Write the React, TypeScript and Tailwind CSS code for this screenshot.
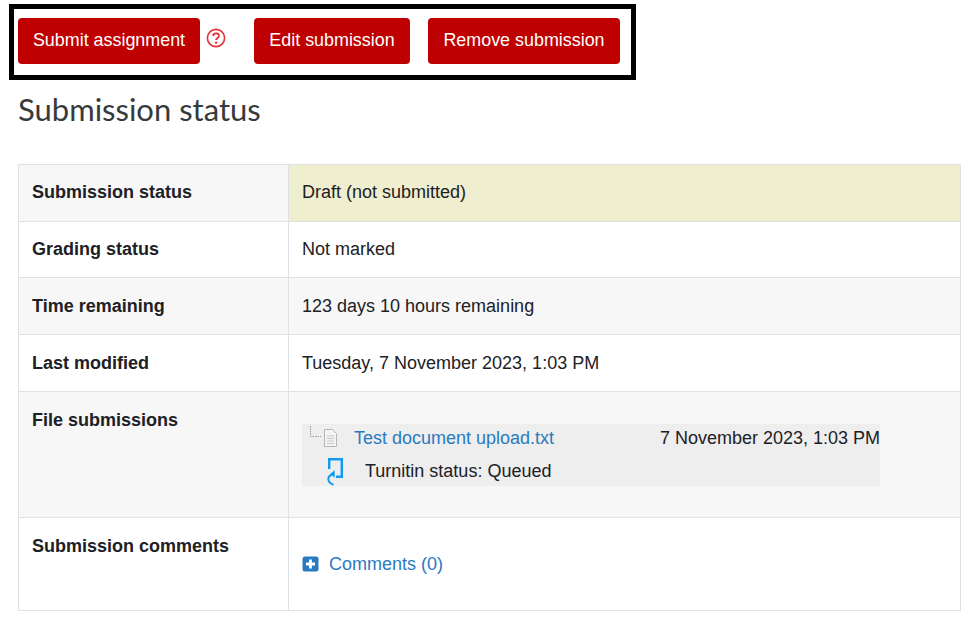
export default function App() {
  const th = "border border-[#dee2e6] px-[13px] align-top font-bold text-[#1d2125] w-[270px]";
  const td = "border border-[#dee2e6] px-[13px] align-top text-[#1d2125]";
  const btn = "h-[46px] rounded-[4px] bg-[#bf0000] text-white text-center text-[17.9px] pb-[2px]";
  return (
    <div className="w-[972px] h-[621px] overflow-hidden bg-white text-[18px] leading-[20px] font-['Liberation_Sans',Arial,sans-serif]">
      <div className="pl-[9px] pt-[4px]">
        <div className="inline-flex items-start border-[5px] border-black w-[627px] h-[76px] pl-[4px] pt-[9px]">
          <button className={`${btn} w-[182px]`}>Submit assignment</button>
          <span className="ml-[6px] mt-[10px] w-[20px] h-[20px] text-[#e5303a]">
            <svg viewBox="0 0 20 20" width="20" height="20" fill="none">
              <circle cx="10" cy="10" r="8.6" stroke="currentColor" strokeWidth="1.6" />
              <path d="M7.2 8c0-1.7 1.2-2.7 2.9-2.7s2.8 1 2.8 2.4c0 1.1-.6 1.7-1.4 2.2-.8.5-1.4 1-1.4 2" stroke="currentColor" strokeWidth="1.8" />
              <circle cx="10.1" cy="14.6" r="1.2" fill="currentColor" />
            </svg>
          </span>
          <button className={`${btn} ml-[28px] w-[156px]`}>Edit submission</button>
          <button className={`${btn} ml-[18px] w-[192px]`}>Remove submission</button>
        </div>
      </div>
      <h2 className="ml-[18px] mt-[9px] h-[41px] text-[31px] leading-[40px] text-[#373a3c] font-['Lato',sans-serif] font-normal">Submission status</h2>
      <table className="ml-[18px] mt-[34px] w-[943px] border-collapse table-fixed">
        <tbody>
          <tr className="h-[57px]">
            <td className={`${th} pt-[17px] bg-[#f7f7f7]`}>Submission status</td>
            <td className={`${td} pt-[17px] bg-[#efeecf]`}>Draft (not submitted)</td>
          </tr>
          <tr className="h-[56px]">
            <td className={`${th} pt-[17px]`}>Grading status</td>
            <td className={`${td} pt-[17px]`}>Not marked</td>
          </tr>
          <tr className="h-[57px]">
            <td className={`${th} pt-[18px] bg-[#f7f7f7]`}>Time remaining</td>
            <td className={`${td} pt-[18px] bg-[#f7f7f7]`}>123 days 10 hours remaining</td>
          </tr>
          <tr className="h-[57px]">
            <td className={`${th} pt-[18px]`}>Last modified</td>
            <td className={`${td} pt-[18px]`}>Tuesday, 7 November 2023, 1:03 PM</td>
          </tr>
          <tr className="h-[126px]">
            <td className={`${th} pt-[18px] bg-[#f7f7f7]`}>File submissions</td>
            <td className={`${td} pt-[32px] bg-[#f7f7f7]`}>
              <div className="w-[578px] h-[62px] bg-[#eeeeee]">
                <div className="flex h-[30px] items-start pt-[4px]">
                  <svg className="mt-[-4px]" width="38" height="26" viewBox="0 0 38 26" fill="none">
                    <path d="M8.5 2v10.5H19" stroke="#9a9a9a" strokeDasharray="1.5 1" />
                    <path d="M22.5 5.5h8l4 4v13h-12z" stroke="#b5b5b5" fill="#f4f4f4" />
                    <path d="M25 12h7M25 14.5h7M25 17h7M25 19.5h7" stroke="#c6c6c6" />
                  </svg>
                  <span className="ml-[14px] w-[306px] text-[#2a7ac0]">Test document upload.txt</span>
                  <span className="whitespace-nowrap">7 November 2023, 1:03 PM</span>
                </div>
                <div className="flex h-[32px] items-start">
                  <svg className="ml-[24px] mt-[2px] shrink-0" width="20" height="30" viewBox="0 0 20 30" fill="none">
                    <path d="M3.2 13V3.2H15.8V20.8H10" stroke="#0f9bf0" strokeWidth="2.4" />
                    <path d="M7.5 28.8C3.2 27.5 1.2 24 2.8 21c1.1-2 3.4-3 5.7-3" stroke="#0f9bf0" strokeWidth="2" />
                    <path d="M8.6 14.2v7.6l-4.4-3.8z" fill="#0f9bf0" />
                  </svg>
                  <span className="ml-[19px] pt-[7px]">Turnitin status: Queued</span>
                </div>
              </div>
            </td>
          </tr>
          <tr className="h-[93px]">
            <td className={`${th} pt-[18px]`}>Submission comments</td>
            <td className={`${td} pt-[36px]`}>
              <div className="flex items-center">
                <svg width="17" height="16" viewBox="0 0 17 16">
                  <rect x="0.5" y="0.5" width="16" height="15" rx="2.5" fill="#2a7ac0" />
                  <path d="M8.5 3.5v9M4 8h9" stroke="#fff" strokeWidth="2.8" />
                </svg>
                <span className="ml-[10px] text-[#2a7ac0]">Comments (0)</span>
              </div>
            </td>
          </tr>
        </tbody>
      </table>
    </div>
  );
}
